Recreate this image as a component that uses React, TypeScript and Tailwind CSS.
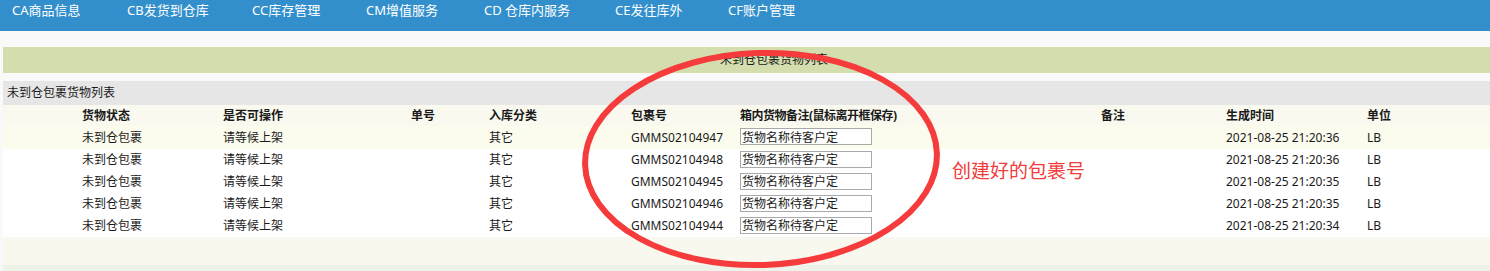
const FONT = { fontFamily: '"Noto Sans", "Noto Sans CJK SC", sans-serif' };

const navItems = [
  { label: "CA商品信息", w: "w-[115px]" },
  { label: "CB发货到仓库", w: "w-[125px]" },
  { label: "CC库存管理", w: "w-[114px]" },
  { label: "CM增值服务", w: "w-[118px]" },
  { label: "CD 仓库内服务", w: "w-[131px]" },
  { label: "CE发往库外", w: "w-[113px]" },
  { label: "CF账户管理", w: "w-[120px]" },
];

const rows = [
  { no: "GMMS02104947", time: "2021-08-25 21:20:36" },
  { no: "GMMS02104948", time: "2021-08-25 21:20:36" },
  { no: "GMMS02104945", time: "2021-08-25 21:20:35" },
  { no: "GMMS02104946", time: "2021-08-25 21:20:35" },
  { no: "GMMS02104944", time: "2021-08-25 21:20:34" },
];

const cols = "grid grid-cols-[79px_141px_188px_78px_142px_109px_361px_125px_141px_1fr]";

export default function App() {
  return (
    <div className="relative h-[271px] w-[1490px] overflow-hidden bg-[#f9f9f9] text-[12px] text-[#1a1a1a]" style={FONT}>
      {/* top nav */}
      <nav className="flex h-[31px] bg-[#338fcc] pl-[12px] pt-[2px] text-[13px] leading-[17px] text-white">
        {navItems.map((n) => (
          <div key={n.label} className={n.w}>
            {n.label}
          </div>
        ))}
      </nav>

      <div className="pl-[3px] pt-[16px]">
        {/* green title bar */}
        <div className="flex h-[26px] items-center bg-[#d3ddad] pl-[717px] leading-none">未到仓包裹货物列表</div>

        <div className="mt-[8px] flex h-[24px] items-center bg-[#e6e6e6] pl-[4px]">未到仓包裹货物列表</div>

        {/* header */}
        <div className={`${cols} h-[21px] items-center bg-[#f9f9ef] font-bold`}>
          <div />
          <div>货物状态</div>
          <div>是否可操作</div>
          <div>单号</div>
          <div>入库分类</div>
          <div>包裹号</div>
          <div className="tracking-[-0.5px]">箱内货物备注(鼠标离开框保存)</div>
          <div>备注</div>
          <div>生成时间</div>
          <div>单位</div>
        </div>

        {rows.map((r, i) => (
          <div
            key={r.no}
            className={`${cols} items-center ${i === 0 ? "h-[23px] bg-[#fbfcee]" : "h-[22px] bg-white"}`}
          >
            <div />
            <div>未到仓包裹</div>
            <div>请等候上架</div>
            <div />
            <div>其它</div>
            <div>{r.no}</div>
            <div>
              <input
                readOnly
                value="货物名称待客户定"
                className="h-[17px] w-[132px] border border-[#a9a9a9] bg-white px-[1px] text-[12px] leading-[15px] text-[#1a1a1a] outline-none"
                style={FONT}
              />
            </div>
            <div />
            <div>{r.time}</div>
            <div>LB</div>
          </div>
        ))}

        <div className="h-[28px] bg-[#f8f8ee]" />
        <div className="h-[6px] bg-[#eef3ea]" />
      </div>

      {/* annotation overlay */}
      <svg className="pointer-events-none absolute left-[578px] top-[47px]" width="366" height="224" viewBox="0 0 366 224">
        <ellipse cx="183" cy="112" rx="176" ry="106" fill="none" stroke="#f53b3b" strokeWidth="6" transform="rotate(-2 183 112)" />
      </svg>
      <div className="absolute left-[952px] top-[159px] text-[19px] leading-[24px] text-[#f23c3c]">创建好的包裹号</div>
    </div>
  );
}
